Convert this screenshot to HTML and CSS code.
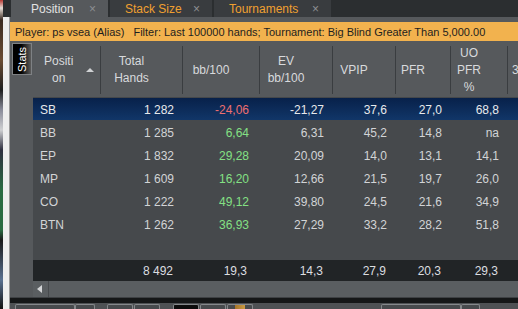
FILE: index.html
```html
<!DOCTYPE html>
<html lang="en">
<head>
  <meta charset="UTF-8">
  <meta name="viewport" content="width=device-width, initial-scale=1.0">
  <title>Position Stats</title>
  <link rel="stylesheet" href="styles.css">
</head>
<body>
  <div class="screen">
    <div class="edge">
      <div class="edge-img"></div>
      <div class="edge-side">
        <div class="edge-top"></div>
        <div class="edge-rest"></div>
      </div>
    </div>

    <div class="window">
      <!-- Report tabs -->
      <div class="tabs">
        <div class="tab active tab-pos"><span>Position</span><span class="close">×</span></div>
        <div class="tab tab-stack"><span>Stack Size</span><span class="close">×</span></div>
        <div class="tab tab-tour"><span>Tournaments</span><span class="close">×</span></div>
      </div>
      <div class="strip"></div>
      <div class="filter">
        <span>Player: ps vsea (Alias)</span>
        <span class="filter-text">Filter: Last 100000 hands; Tournament: Big Blind Greater Than 5,000.00</span>
      </div>

      <div class="content">
        <div class="side">
          <div class="stats-tab">Stats</div>
        </div>

        <div class="grid">
          <div class="head">
            <div class="hcell c-pos sorted"><span>Positi<br>on</span><span class="sort-arrow"></span></div>
            <div class="hcell c-total"><span>Total<br>Hands</span></div>
            <div class="hcell c-bb"><span>bb/100</span></div>
            <div class="hcell c-ev"><span>EV<br>bb/100</span></div>
            <div class="hcell c-vpip"><span>VPIP</span></div>
            <div class="hcell c-pfr"><span>PFR</span></div>
            <div class="hcell c-uo"><span>UO<br>PFR<br>%</span></div>
            <div class="hcell c-next"><span>3Bet</span></div>
          </div>

          <div class="rows" id="rows"></div>

          <div class="total">
            <div class="cell c-pos"></div>
            <div class="cell c-total">8&nbsp;492</div>
            <div class="cell c-bb">19,3</div>
            <div class="cell c-ev">14,3</div>
            <div class="cell c-vpip">27,9</div>
            <div class="cell c-pfr">20,3</div>
            <div class="cell c-uo">29,3</div>
          </div>

          <div class="hscroll">
            <div class="scroll-btn"><span class="arrow-left"></span></div>
          </div>
        </div>
      </div>

      <div class="divider"></div>
      <div class="toolbar">
        <div class="tb-btn w60 first"></div>
        <div class="tb-btn w20 join"></div>
        <div class="tb-btn w26 gap12"></div>
        <div class="tb-btn w26 gap1"></div>
        <div class="tb-btn w26 gap13 dark"></div>
        <div class="tb-btn w26 gap1"></div>
        <div class="tb-btn w26 gap1 gold"></div>
        <div class="tb-btn w80 gap128"></div>
        <div class="tb-btn w19 join"></div>
      </div>
    </div>
  </div>

  <script>
    const positions = [
      { pos: "SB",  hands: "1 282", bb: "-24,06", ev: "-21,27", vpip: "37,6", pfr: "27,0", uo: "68,8", selected: true },
      { pos: "BB",  hands: "1 285", bb: "6,64",   ev: "6,31",   vpip: "45,2", pfr: "14,8", uo: "na" },
      { pos: "EP",  hands: "1 832", bb: "29,28",  ev: "20,09",  vpip: "14,0", pfr: "13,1", uo: "14,1" },
      { pos: "MP",  hands: "1 609", bb: "16,20",  ev: "12,66",  vpip: "21,5", pfr: "19,7", uo: "26,0" },
      { pos: "CO",  hands: "1 222", bb: "49,12",  ev: "39,80",  vpip: "24,5", pfr: "21,6", uo: "34,9" },
      { pos: "BTN", hands: "1 262", bb: "36,93",  ev: "27,29",  vpip: "33,2", pfr: "28,2", uo: "51,8" },
    ];

    // Render the position rows
    document.getElementById("rows").innerHTML = positions.map(r => `
      <div class="row${r.selected ? " selected" : ""}">
        <div class="cell c-pos">${r.pos}</div>
        <div class="cell c-total">${r.hands.replace(" ", "&nbsp;")}</div>
        <div class="cell c-bb ${r.bb.startsWith("-") ? "neg" : "pos"}">${r.bb}</div>
        <div class="cell c-ev">${r.ev}</div>
        <div class="cell c-vpip">${r.vpip}</div>
        <div class="cell c-pfr">${r.pfr}</div>
        <div class="cell c-uo">${r.uo}</div>
      </div>
    `).join("");
  </script>
</body>
</html>
```

FILE: styles.css
```css
/* General styles */
body {
  margin: 0;
  width: 518px;
  height: 309px;
  overflow: hidden;
  font-family: "Liberation Sans", Arial, sans-serif;
  font-size: 12px;
  background-color: #2b2e30;
}
.screen {
  display: flex;
  height: 309px;
}

/* Neighbouring window peeking in on the left */
.edge {
  width: 10px;
  display: flex;
}
.edge-img {
  width: 3px;
  background: linear-gradient(to bottom, #b83a34 0, #e6ddd6 8px, #3b2b22 20px, #6b4c33 60px, #1f1f1f 90px, #8a8c9a 110px, #cfd0d2 130px, #2f3040 150px, #2a6b42 190px, #2a6b42 230px, #1a1a1a 240px, #5a7191 280px, #101010 309px);
}
.edge-side {
  width: 7px;
  display: flex;
  flex-direction: column;
}
.edge-top {
  height: 17px;
  background-color: #2b2e30;
}
.edge-rest {
  flex: 1;
  background: linear-gradient(to right, #eeeeee 6px, #9a9a9a 6px);
}

.window {
  flex: 1;
  min-width: 0;
  display: flex;
  flex-direction: column;
}

/* Tabs */
.tabs {
  height: 17px;
  display: flex;
  gap: 2px;
  padding-left: 1px;
  background-color: #2b2e30;
}
.tab {
  box-sizing: border-box;
  display: flex;
  align-items: center;
  justify-content: space-between;
  padding: 0 12px 0 15px;
  background-color: #393c3f;
  color: #f0a030;
}
.tab.active {
  background-color: #56595c;
  color: #e2e2e2;
  padding-left: 20px;
}
.tab-pos { width: 97px; }
.tab-stack { width: 102px; }
.tab-tour { width: 117px; }
.tab .close {
  color: #8c8f92;
}
.strip {
  height: 5px;
  background-color: #56595c;
}
.filter {
  height: 19px;
  display: flex;
  align-items: center;
  padding-left: 5px;
  white-space: nowrap;
  overflow: hidden;
  font-size: 11px;
  background-color: #f2b24e;
  color: #1e1e1e;
}
.filter-text {
  margin-left: 9px;
}

/* Stats panel */
.content {
  flex: 1;
  min-height: 0;
  display: flex;
  background-color: #56595c;
}
.side {
  width: 23px;
  padding: 2px 0 0 2px;
  box-sizing: border-box;
}
.stats-tab {
  width: 20px;
  height: 32px;
  box-sizing: border-box;
  border: 1px solid #7e8184;
  background: linear-gradient(to left, #000 45%, #5c5c5c);
  color: white;
  font-size: 11px;
  writing-mode: vertical-rl;
  transform: rotate(180deg);
  display: flex;
  align-items: center;
  justify-content: center;
}
.grid {
  flex: 1;
  min-width: 0;
  overflow: hidden;
  display: flex;
  flex-direction: column;
}
.head {
  height: 56px;
  display: flex;
  border-bottom: 1px solid #45484b;
}
.hcell {
  flex: none;
  box-sizing: border-box;
  margin: 5px 0 3px;
  padding-right: 20px;
  border-right: 1px solid #3a3d40;
  display: flex;
  align-items: center;
  justify-content: center;
  text-align: center;
  line-height: 17px;
  color: #d8dadc;
  white-space: nowrap;
}
.hcell.sorted {
  justify-content: flex-start;
  padding: 0 6px 0 11px;
}
.hcell.c-next {
  justify-content: flex-start;
  padding: 0 0 0 4px;
  border-right: none;
}
.sort-arrow {
  margin-left: auto;
  border-left: 4px solid transparent;
  border-right: 4px solid transparent;
  border-bottom: 4px solid #d0d2d4;
}

.c-pos { width: 68px; }
.c-total { width: 82px; }
.c-bb { width: 77px; }
.c-ev { width: 73px; }
.c-vpip { width: 63px; }
.c-pfr { width: 55px; }
.c-uo { width: 57px; }
.c-next { width: 40px; }

.rows {
  height: 162px;
  background-color: #46494c;
}
.row {
  height: 23px;
  display: flex;
  align-items: center;
  color: #d2d4d6;
}
.row.selected {
  background: linear-gradient(#08214a, #113668) 0 0 / 100% 22px no-repeat;
  color: #e8eaec;
}
.cell {
  flex: none;
  box-sizing: border-box;
  padding-right: 9px;
  text-align: right;
  white-space: nowrap;
}
.cell.c-pos {
  padding: 0 0 0 7px;
  text-align: left;
}
.cell.c-bb { padding-right: 11px; }
.neg { color: #ee6f6f; }
.pos { color: #84e084; }

.total {
  height: 21px;
  display: flex;
  align-items: center;
  background-color: #212426;
  color: #dcdee0;
}
.total .cell { padding-right: 10px; }
.total .cell.c-bb { padding-right: 13px; }

.hscroll {
  height: 16px;
  display: flex;
  background-color: #5a5e61;
}
.scroll-btn {
  width: 16px;
  box-sizing: border-box;
  border-right: 1px solid #474a4d;
  display: flex;
  align-items: center;
  justify-content: center;
}
.arrow-left {
  border-top: 4px solid transparent;
  border-bottom: 4px solid transparent;
  border-right: 5px solid #d2d4d6;
  margin-right: 2px;
}

/* Bottom toolbar */
.divider {
  height: 6px;
  box-sizing: border-box;
  border-top: 1px solid #3e4144;
  background-color: #151718;
}
.toolbar {
  height: 6px;
  display: flex;
  align-items: flex-start;
  padding-top: 1px;
  box-sizing: border-box;
  background-color: #4e5154;
}
.tb-btn {
  height: 10px;
  flex: none;
  box-sizing: border-box;
  border: 1px solid #85888b;
  border-bottom: none;
  border-radius: 2px 2px 0 0;
  background-color: #474a4d;
}
.tb-btn.dark { background-color: #0c0c0c; }
.tb-btn.gold { background: linear-gradient(to right, #474a4d 30%, #a8752a 30%, #c99a42 70%, #474a4d 70%); }
.w60 { width: 60px; }
.w20 { width: 20px; }
.w26 { width: 26px; }
.w80 { width: 80px; }
.w19 { width: 19px; }
.first { margin-left: 5px; }
.gap1 { margin-left: 1px; }
.gap12 { margin-left: 12px; }
.gap13 { margin-left: 13px; }
.gap128 { margin-left: 128px; }
```
